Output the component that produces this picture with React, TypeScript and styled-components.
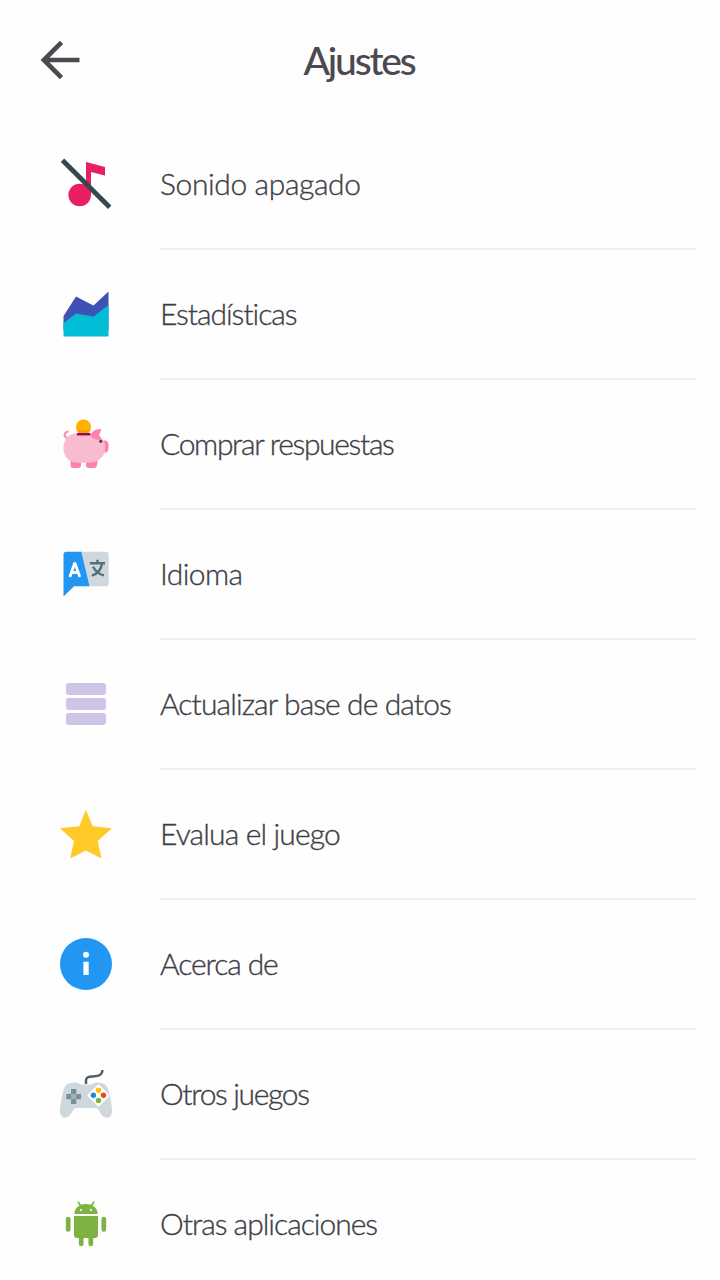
import React from "react";
import styled, { createGlobalStyle } from "styled-components";

const GlobalStyle = createGlobalStyle`
  * { box-sizing: border-box; }
  html, body { margin: 0; background: #fefefe; }
  body { overflow: hidden; }
`;
const Screen = styled.main`
  width: 720px;
  height: 1280px;
  overflow: hidden;
  background: #fefefe;
  color: #3e3e46;
  font-family: Lato, "Open Sans", sans-serif;
`;
const Header = styled.header`
  height: 120px;
  display: grid;
  grid-template-columns: 120px 1fr 120px;
`;
const BackButton = styled.button`
  border: 0;
  padding: 0;
  background: none;
  height: 120px;
`;
const Title = styled.h1`
  margin: 0;
  padding-right: 2px;
  text-align: center;
  font-size: 39px;
  font-weight: 500;
  line-height: 121px;
  letter-spacing: -2.2px;
  color: #4a4a50;
`;
const List = styled.ul`
  margin: 0;
  padding: 0;
  list-style: none;
`;
const Row = styled.li`
  height: 130px;
  display: grid;
  grid-template-columns: 110px 1fr;
  padding: 0 24px 0 50px;
`;
const IconSlot = styled.div`
  padding-top: 30px;
  height: 130px;
  svg { display: block; }
`;
const Label = styled.div<{ $spacing: number }>`
  height: 130px;
  border-bottom: 2px solid #f1f1f2;
  font-size: 30px;
  font-weight: 300;
  line-height: 127px;
  white-space: nowrap;
  -webkit-text-stroke: 0.35px #3e3e46;
  letter-spacing: ${(p) => p.$spacing}px;
`;

const Icon = ({ children }: { children: React.ReactNode }) => (
  <svg width="70" height="70" viewBox="0 0 70 70" fill="none">{children}</svg>
);

const MusicOff = () => (
  <Icon>
    <circle cx="29.7" cy="45" r="11.3" fill="#e91e63" />
    <path d="M36 12L55 17V25.5L41 22V45H36Z" fill="#e91e63" />
    <path d="M12.5 10.3L59.7 57.3" stroke="#37474f" strokeWidth="4.8" />
  </Icon>
);
const AreaChart = () => (
  <Icon>
    <path d="M13.5 36L26 16.5L43.5 25.5L58.5 11.5V50H13.5Z" fill="#3f51b5" />
    <path d="M13.5 43L26 33.5L43.5 36.5L58.5 25V56.5H13.5Z" fill="#00bcd4" />
  </Icon>
);
const PiggyBank = () => (
  <Icon>
    <path d="M18.8 21.5C14.8 21.5 13.5 24.8 15.7 27C17 28.3 18.3 29 19 29.5" stroke="#f48fb1" strokeWidth="2.2" />
    <path d="M20 48H31V55Q31 58 28 58H23Q20 58 20.8 54Z M36 48H48L47 55Q46.5 58 44 58H39Q36 58 36 55Z" fill="#ff80ab" />
    <path d="M53 30.5H55.5Q58.6 31 58.6 36.5Q58.6 42 55.5 42.5H53Z" fill="#ff80ab" />
    <path d="M28 23.2H37C45 23.2 53.5 27 55 34V42C53 47 48 52.7 39 52.7H28C18 52.7 13.5 46 13.5 38C13.5 29 19 23.2 28 23.2Z" fill="#f8bbd0" />
    <path d="M40.5 25.5C42 20.5 46.5 18.7 51.4 19.3L49 25.5L52 29.2C48 30.8 42 29 40.5 25.5Z" fill="#ff80ab" />
    <rect x="27" y="23" width="13.3" height="2.4" fill="#880e4f" />
    <path d="M28.5 22.8A7.6 7.6 0 1 1 38.5 22.8Z" fill="#ffb300" />
    <path d="M26.8 20H40.2L38.5 22.8H28.5Z" fill="#ff9800" />
    <circle cx="50.8" cy="31.3" r="1.6" fill="#37474f" />
  </Icon>
);
const Translate = () => (
  <Icon>
    <path d="M29 11.8H56Q58.7 11.8 58.7 14.5V43.5Q58.7 46.3 56 46.3H39Z" fill="#cfd8dc" />
    <path d="M16.3 11.8H31.3L39.5 46.3H24L13.5 56.5V14.5Q13.5 11.8 16.3 11.8Z" fill="#2196f3" />
    <path d="M19.8 37L24.8 22.8L29.8 37M21.5 32.5H28.2" stroke="#fff" strokeWidth="2.8" strokeLinejoin="bevel" />
    <path d="M39.8 23.3H55M47.5 19.8V23.3M43 26.8C45 30.5 49 34.3 54 35.4M52 23.5C51.3 29.5 47.5 33.7 41.8 35.6" stroke="#546e7a" strokeWidth="2.4" />
  </Icon>
);
const Database = () => (
  <Icon>
    {[13, 28, 43].map((y) => <rect key={y} x="16" y={y} width="40" height="12" rx="2.4" fill="#d1c4e9" />)}
  </Icon>
);
const Star = () => (
  <Icon>
    <path d="M35.9 9.7L42.6 26.3L62 28.2L47.7 41L51.5 58.4L35.8 50.5L20.2 58.4L23.9 41L9.9 28.2L29.3 26.3Z" fill="#ffca28" />
  </Icon>
);
const Info = () => (
  <Icon>
    <circle cx="36" cy="34" r="26" fill="#2196f3" />
    <circle cx="36" cy="24.7" r="3" fill="#fff" />
    <path d="M33.4 31.7H38.7V45H33.4Z" fill="#fff" />
  </Icon>
);
const Gamepad = () => (
  <Icon>
    <path d="M36 24V20.5C36 17 38 16.8 43 16.5C49 16.2 52.5 15 52.5 10" stroke="#546068" strokeWidth="2.5" />
    <path d="M25 22.5C29 22.5 29 24.6 32 24.6H40C43 24.6 43 22.5 47 22.5C55 22.5 58 26 59.5 34C61 42 62 46.5 62 51C62 59 54.5 60 50.8 53.5C48.8 50 48 48 44.5 48H27.5C24 48 23.2 50 21.2 53.5C17.5 60 10 59 10 51C10 46.5 11 42 12.5 34C14 26 17 22.5 25 22.5Z" fill="#cfd8dc" />
    <path d="M21 29H26.3V34H31V39.2H26.3V44H21V39.2H16.3V34H21Z" fill="#78909c" />
    <rect x="21" y="34" width="5.3" height="5.2" fill="#a0b0b8" />
    <path d="M48.5 25.5L58.5 35.5L48.5 45.5L38.5 35.5Z" fill="#fff" stroke="#fff" strokeWidth="2" strokeLinejoin="round" />
    <circle cx="48.5" cy="30.2" r="2.7" fill="#ffc107" />
    <circle cx="53.5" cy="35.3" r="2.7" fill="#e64a19" />
    <circle cx="48.5" cy="40.4" r="2.7" fill="#7cb342" />
    <circle cx="43.4" cy="35.3" r="2.7" fill="#1e88e5" />
  </Icon>
);
const Android = () => (
  <Icon>
    <path d="M24.3 24C24.8 17 30 14 36 14C42 14 47.2 17 47.8 24Z M24 26H48V45Q48 48 45 48H27Q24 48 24 45Z" fill="#7cb342" />
    <path d="M18.2 29.2V39.5M53.8 29.2V39.5M31.2 46V54M40.8 46V54" stroke="#7cb342" strokeWidth="4.7" strokeLinecap="round" />
    <path d="M28.3 12.3L31.2 16.5M43.7 12.3L40.8 16.5" stroke="#7cb342" strokeWidth="1.7" strokeLinecap="round" />
    <circle cx="31" cy="20" r="1.1" fill="#fff" />
    <circle cx="41" cy="20" r="1.1" fill="#fff" />
  </Icon>
);

const items = [
  { label: "Sonido apagado", icon: MusicOff, spacing: -0.38 },
  { label: "Estadísticas", icon: AreaChart, spacing: -1.05 },
  { label: "Comprar respuestas", icon: PiggyBank, spacing: -1.33 },
  { label: "Idioma", icon: Translate, spacing: -0.6 },
  { label: "Actualizar base de datos", icon: Database, spacing: -0.9 },
  { label: "Evalua el juego", icon: Star, spacing: -0.85 },
  { label: "Acerca de", icon: Info, spacing: -1.1 },
  { label: "Otros juegos", icon: Gamepad, spacing: -1.35 },
  { label: "Otras aplicaciones", icon: Android, spacing: -1 },
];

export default function App() {
  return (
    <Screen>
      <GlobalStyle />
      <Header>
        <BackButton aria-label="Volver">
          <svg width="120" height="120" viewBox="0 0 120 120" fill="none" stroke="#4a4a50" strokeWidth="4.6">
            <path d="M79.5 60H44M61.5 42.3L43.8 60L61.5 77.7" />
          </svg>
        </BackButton>
        <Title>Ajustes</Title>
      </Header>
      <List>
        {items.map(({ label, icon: Glyph, spacing }) => (
          <Row key={label}>
            <IconSlot><Glyph /></IconSlot>
            <Label $spacing={spacing}>{label}</Label>
          </Row>
        ))}
      </List>
    </Screen>
  );
}
